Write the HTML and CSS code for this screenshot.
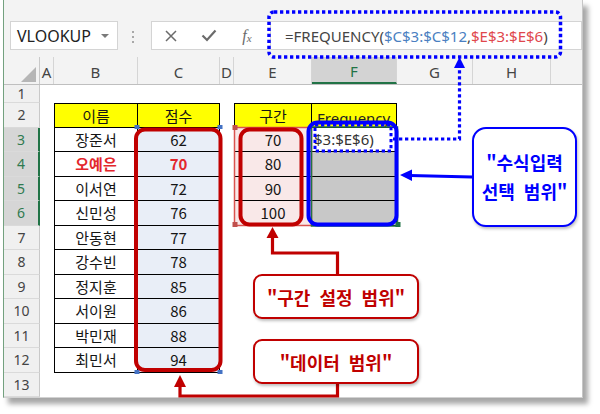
FILE: index.html
```html
<!DOCTYPE html>
<html lang="ko">
<head>
<meta charset="utf-8">
<title>FREQUENCY</title>
<link rel="stylesheet" href="styles.css">
</head>
<body>
<div class="page">
  <div class="window">
    <div class="toolbar">
      <div class="namebox"><span>VLOOKUP</span><span class="caret"></span></div>
      <div class="grip"><i></i><i></i><i></i></div>
      <div class="fxbox">
        <span class="slot"><svg width="12" height="12" viewBox="0 0 12 12"><path d="M1 1L11 11M11 1L1 11" stroke="#6b6b6b" stroke-width="1.5" fill="none"/></svg></span>
        <span class="slot"><svg width="16" height="13" viewBox="0 0 16 13"><path d="M1.5 6.5L6 11L14.5 1.5" stroke="#6b6b6b" stroke-width="2.2" fill="none"/></svg></span>
        <span class="slot fx">f<span class="fxs">x</span></span>
      </div>
      <div class="formula">=FREQUENCY(<span class="ref-b">$C$3:$C$12</span>,<span class="ref-r">$E$3:$E$6</span>)</div>
    </div>
    <div class="sheet">
      <div class="row colhead">
        <div class="c ch corner"><i class="tri"></i></div>
        <div class="c ch">A</div>
        <div class="c ch">B</div>
        <div class="c ch">C</div>
        <div class="c ch">D</div>
        <div class="c ch">E</div>
        <div class="c ch sel">F</div>
        <div class="c ch">G</div>
        <div class="c ch">H</div>
        <div class="c ch last"></div>
      </div>
      <div class="row r1"><div class="c rh">1</div></div>
      <div class="row">
        <div class="c rh">2</div>
        <div class="c t top left hd cB">이름</div>
        <div class="c t top hd cC">점수</div>
        <div class="c t top left hd cE">구간</div>
        <div class="c t top hd fqh cF">Frequency</div>
      </div>
      <div class="row">
        <div class="c rh sel">3</div>
        <div class="c t left cB">장준서</div>
        <div class="c t sc cC">62</div>
        <div class="c t left bn cE">70</div>
        <div class="c t f3 cF">$3:$E$6)</div>
      </div>
      <div class="row">
        <div class="c rh sel">4</div>
        <div class="c t left red cB">오예은</div>
        <div class="c t sc red cC">70</div>
        <div class="c t left bn cE">80</div>
        <div class="c t fq cF"></div>
      </div>
      <div class="row">
        <div class="c rh sel">5</div>
        <div class="c t left cB">이서연</div>
        <div class="c t sc cC">72</div>
        <div class="c t left bn cE">90</div>
        <div class="c t fq cF"></div>
      </div>
      <div class="row">
        <div class="c rh sel">6</div>
        <div class="c t left cB">신민성</div>
        <div class="c t sc cC">76</div>
        <div class="c t left bn cE">100</div>
        <div class="c t fq cF"></div>
      </div>
      <div class="row">
        <div class="c rh">7</div>
        <div class="c t left cB">안동현</div>
        <div class="c t sc cC">77</div>
      </div>
      <div class="row">
        <div class="c rh">8</div>
        <div class="c t left cB">강수빈</div>
        <div class="c t sc cC">78</div>
      </div>
      <div class="row">
        <div class="c rh">9</div>
        <div class="c t left cB">정지훈</div>
        <div class="c t sc cC">85</div>
      </div>
      <div class="row">
        <div class="c rh">10</div>
        <div class="c t left cB">서이원</div>
        <div class="c t sc cC">86</div>
      </div>
      <div class="row">
        <div class="c rh">11</div>
        <div class="c t left cB">박민재</div>
        <div class="c t sc cC">88</div>
      </div>
      <div class="row">
        <div class="c rh">12</div>
        <div class="c t left cB">최민서</div>
        <div class="c t sc cC">94</div>
      </div>
      <div class="row">
        <div class="c rh">13</div>
      </div>
    </div>
  </div>

  <svg class="overlay" width="600" height="414" viewBox="0 0 600 414">
    <!-- excel range highlights -->
    <rect x="234.5" y="127.5" width="77" height="98" fill="none" stroke="#d9534f" stroke-width="1.5"/>
    <rect x="232.5" y="125" width="5" height="5" fill="#c0504d"/>
    <rect x="232.5" y="222" width="5" height="5" fill="#c0504d"/>
    <rect x="134.5" y="125" width="5" height="4" fill="#4472c4"/>
    <rect x="217.5" y="125" width="5" height="4" fill="#4472c4"/>
    <rect x="134.5" y="370" width="5" height="4" fill="#4472c4"/>
    <rect x="217.5" y="370" width="5" height="4" fill="#4472c4"/>
    <rect x="311.5" y="127" width="86" height="99" fill="none" stroke="#217346" stroke-width="1.5"/>
    <rect x="395.5" y="222" width="5" height="5" fill="#217346"/>

    <!-- red ranges -->
    <rect x="136" y="129.5" width="84.5" height="240.5" rx="9" fill="none" stroke="#c00000" stroke-width="4"/>
    <rect x="240.5" y="129.5" width="61" height="95" rx="9" fill="none" stroke="#c00000" stroke-width="4"/>

    <!-- blue selection -->
    <rect x="308.5" y="122.5" width="88" height="102" rx="9" fill="none" stroke="#0000ff" stroke-width="4"/>
    <rect x="315" y="125" width="76" height="26" fill="none" stroke="#0000ff" stroke-width="3" stroke-dasharray="3.3 2.7"/>

    <!-- formula dotted frame -->
    <rect x="269" y="12" width="291.5" height="45" rx="5" fill="none" stroke="#0000ff" stroke-width="3.5" stroke-dasharray="3.3 2.7"/>

    <!-- dotted connector to formula -->
    <path d="M393 139H459.5V67" fill="none" stroke="#0000ff" stroke-width="3.2" stroke-dasharray="3.3 2.7"/>
    <polygon points="459.5,57 454,68 465,68" fill="#0000ff"/>

    <!-- blue arrow -->
    <path d="M472 177L410 175.5" fill="none" stroke="#0000ff" stroke-width="3"/>
    <polygon points="400,175 412,169.5 412,181" fill="#0000ff"/>

    <!-- red connectors -->
    <path d="M337.5 275V253H272.5V236" fill="none" stroke="#c00000" stroke-width="3.2"/>
    <polygon points="272.5,227 266.5,238 278.5,238" fill="#c00000"/>
    <path d="M337.5 383V396H180V386" fill="none" stroke="#c00000" stroke-width="3.2"/>
    <polygon points="180,375 174,387 186,387" fill="#c00000"/>
  </svg>

  <div class="callout blue">"수식입력<br>선택 범위"</div>
  <div class="callout redc c1">"구간 설정 범위"</div>
  <div class="callout redc c2">"데이터 범위"</div>
</div>
</body>
</html>
```
FILE: styles.css
```css
html, body {
  margin: 0;
  padding: 0;
  background: #ffffff;
}

.page {
  position: relative;
  width: 600px;
  height: 414px;
  overflow: hidden;
}

.window {
  position: relative;
  margin-left: 3px;
  width: 578px;
  height: 397px;
  background: #ffffff;
  border-left: 1px solid #73a17f;
  border-right: 1px solid #c6c6c6;
  border-bottom: 1px solid #d2d2d2;
  box-shadow: 5px 6px 5px rgba(0, 0, 0, 0.35);
}

/* ---------- toolbar ---------- */
.toolbar {
  height: 57px;
  box-sizing: border-box;
  background: #f3f3f3;
  display: flex;
  align-items: flex-start;
  padding: 21px 0 0 6px;
}

.namebox {
  width: 108px;
  height: 29px;
  box-sizing: border-box;
  background: #ffffff;
  border: 1px solid #d4d4d4;
  display: flex;
  align-items: center;
  padding: 0 8px 0 6px;
  font: 16px "Noto Sans", sans-serif;
  color: #222222;
}

.caret {
  margin-left: auto;
  width: 0;
  height: 0;
  border-left: 4px solid transparent;
  border-right: 4px solid transparent;
  border-top: 4px solid #7a7a7a;
}

.grip {
  display: flex;
  flex-direction: column;
  gap: 3px;
  margin: 10px 0 0 14px;
}

.grip i {
  display: block;
  width: 2px;
  height: 2px;
  background: #a8a8a8;
}

.fxbox {
  margin-left: 17px;
  width: 119px;
  height: 29px;
  box-sizing: border-box;
  background: #ffffff;
  border: 1px solid #d4d4d4;
  border-right: none;
  display: flex;
  align-items: center;
  padding-left: 0;
}

.slot {
  width: 38px;
  display: flex;
  align-items: center;
  justify-content: center;
}

.fx {
  font: italic 16px "Liberation Serif", serif;
  color: #6a6a6a;
}

.fxs {
  font-size: 11px;
  position: relative;
  top: 2px;
}

.formula {
  flex: 1;
  height: 29px;
  box-sizing: border-box;
  background: #ffffff;
  border: 1px solid #d4d4d4;
  display: flex;
  align-items: center;
  padding-left: 14px;
  font: 15px "Noto Sans", sans-serif;
  color: #454545;
  white-space: pre;
}

.ref-b { color: #4a7fc1; }
.ref-r { color: #e0474c; }

/* ---------- sheet ---------- */
.row {
  display: grid;
  grid-template-columns: 36px 14px 84px 82px 14px 78px 85px 76px 78px 31px;
  height: 24.5px;
}

.colhead {
  height: 28px;
  box-sizing: border-box;
  background: #f3f3f3;
  border-bottom: 1px solid #bfbfbf;
}

.r1 { height: 18px; }

.c {
  display: flex;
  align-items: center;
  justify-content: center;
  box-sizing: border-box;
  line-height: 1;
  min-width: 0;
  overflow: hidden;
  white-space: nowrap;
}

.ch {
  border-right: 1px solid #d5d5d5;
  font: 15px "Noto Sans", sans-serif;
  color: #444444;
  padding-top: 2px;
}

.ch.last { border-right: none; }

.ch.sel {
  background: #d3d3d3;
  border-bottom: 2px solid #217346;
  color: #217346;
}

.corner {
  align-items: flex-end;
  justify-content: flex-end;
  padding: 0 3px 2px 0;
  border-right: 1px solid #c9c9c9;
}

.tri {
  display: block;
  width: 15px;
  height: 15px;
  background: #b6b6b6;
  clip-path: polygon(100% 0, 100% 100%, 0 100%);
}

.rh {
  grid-column: 1;
  background: #f0f0f0;
  border-right: 1px solid #c9c9c9;
  border-bottom: 1px solid #dadada;
  font: 14px "Noto Sans", sans-serif;
  color: #444444;
}

.rh.sel {
  background: #d6d6d6;
  color: #2f7a50;
  border-right: 2px solid #217346;
}

.cB { grid-column: 3; }
.cC { grid-column: 4; }
.cE { grid-column: 6; }
.cF { grid-column: 7; }

.t {
  border-right: 1px solid #000000;
  border-bottom: 1px solid #000000;
  font: 15px "Noto Sans CJK KR", "Noto Sans", sans-serif;
  color: #151515;
  background: #ffffff;
}

.t.top { border-top: 1px solid #000000; }
.t.left { border-left: 1px solid #000000; }

.hd { background: #ffff00; }
.sc { background: #e9eef7; }
.bn { background: #f9e8e8; }
.fq { background: #c8c8c8; }

.red {
  color: #e3262b;
  font-weight: 700;
}

.fqh {
  justify-content: flex-start;
  padding: 5px 0 0 5px;
  font-family: "Noto Sans", sans-serif;
  color: #222222;
}

.f3 {
  justify-content: flex-start;
  padding-left: 2px;
  font-family: "Noto Sans", sans-serif;
  color: #333333;
}

/* ---------- overlays ---------- */
.overlay {
  position: absolute;
  left: 0;
  top: 0;
  pointer-events: none;
}

.callout {
  position: absolute;
  box-sizing: border-box;
  display: flex;
  align-items: center;
  justify-content: center;
  text-align: center;
  background: #ffffff;
  font: 700 18px "Noto Sans CJK KR", "Noto Sans", sans-serif;
  word-spacing: 4px;
  box-shadow: 1px 2px 3px rgba(0, 0, 0, 0.25);
}

.blue {
  left: 472px;
  top: 127px;
  width: 105px;
  height: 100px;
  border: 2px solid #0000ff;
  border-radius: 14px;
  color: #0000ff;
  line-height: 29px;
}

.redc {
  left: 253px;
  width: 166px;
  height: 45px;
  border: 2px solid #c00000;
  border-radius: 9px;
  color: #c00000;
}

.c1 { top: 274px; }
.c2 { top: 339px; }
```
